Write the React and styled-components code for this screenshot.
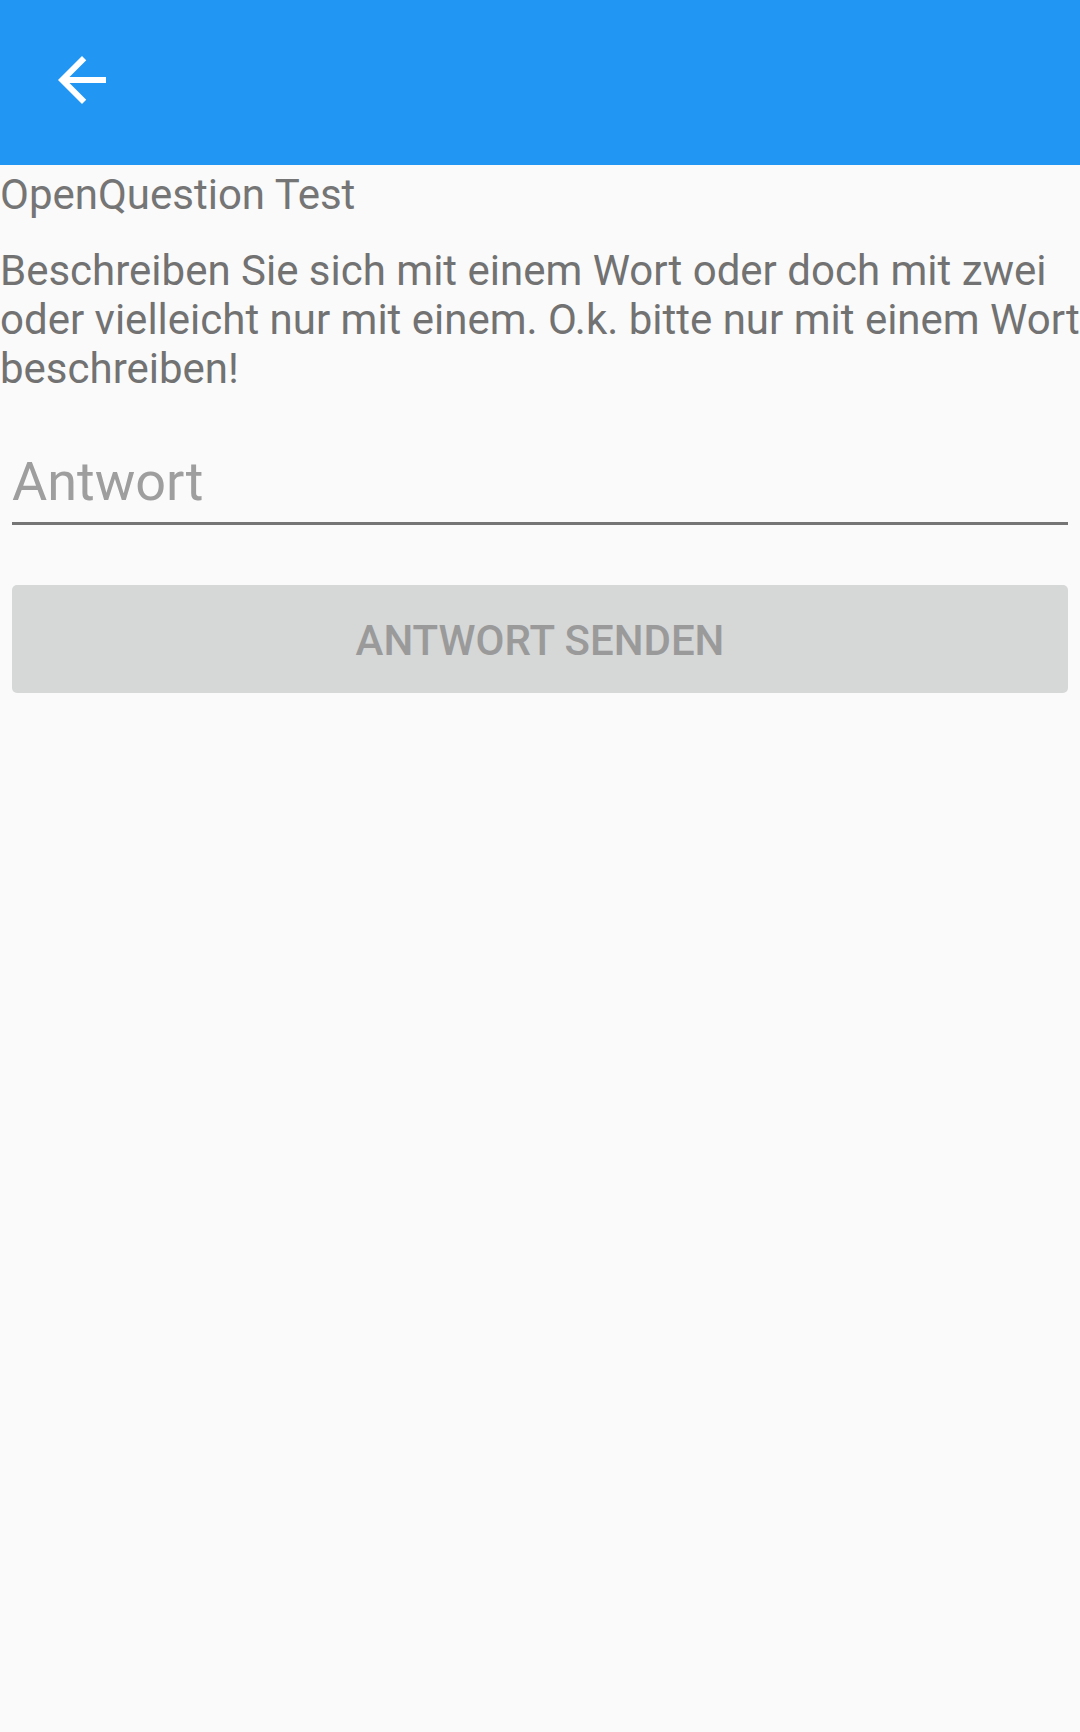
import React from 'react'
import styled, { createGlobalStyle } from 'styled-components'

const GlobalStyle = createGlobalStyle`
  html, body {
    margin: 0;
    padding: 0;
    background: #fafafa;
  }
  body {
    font-family: Roboto, "Noto Sans", sans-serif;
  }
`

const Page = styled.div`
  min-height: 1732px;
  background: #fafafa;
  display: flex;
  flex-direction: column;
`

const Toolbar = styled.header`
  height: 165px;
  background: #2196f3;
  display: flex;
  align-items: flex-start;
  padding: 44px 0 0 46px;
  box-sizing: border-box;
`

const BackButton = styled.button`
  width: 72px;
  height: 72px;
  padding: 0;
  border: 0;
  background: transparent;
  display: flex;
  cursor: pointer;
  svg {
    width: 72px;
    height: 72px;
    fill: #ffffff;
  }
`

const Title = styled.div`
  margin-top: 5px;
  font-size: 42px;
  color: #757575;
`

const Question = styled.p`
  margin: 27px 0 0;
  font-size: 42px;
  color: #727272;
`

const Form = styled.div`
  display: flex;
  flex-direction: column;
  padding: 0 12px;
  margin-top: 57px;
`

const AnswerInput = styled.input`
  font-family: Roboto, sans-serif;
  font-size: 54px;
  line-height: 64px;
  height: 64px;
  padding: 0 0 8px;
  margin: 0;
  border: 0;
  border-bottom: 3px solid #757575;
  background: transparent;
  color: #212121;
  outline: none;
  &::placeholder {
    color: #9e9e9e;
  }
`

const SendButton = styled.button`
  margin-top: 60px;
  height: 108px;
  border: 0;
  border-radius: 5px;
  background: #d6d7d7;
  color: #9a9a9a;
  font-family: Roboto, sans-serif;
  font-size: 42px;
  font-weight: 500;
  text-transform: uppercase;
  padding: 2px 0 0;
`

const BackArrow = () => (
  <svg viewBox="0 0 24 24">
    <path d="M20 11H7.83l5.59-5.59L12 4l-8 8 8 8 1.41-1.41L7.83 13H20v-2z" />
  </svg>
)

export default function App() {
  return (
    <Page>
      <GlobalStyle />
      <Toolbar>
        <BackButton aria-label="Zurück">
          <BackArrow />
        </BackButton>
      </Toolbar>
      <Title>OpenQuestion Test</Title>
      <Question>
        Beschreiben Sie sich mit einem Wort oder doch mit zwei oder vielleicht nur mit einem. O.k. bitte nur mit einem Wort beschreiben!
      </Question>
      <Form>
        <AnswerInput placeholder="Antwort" />
        <SendButton disabled>Antwort senden</SendButton>
      </Form>
    </Page>
  )
}
